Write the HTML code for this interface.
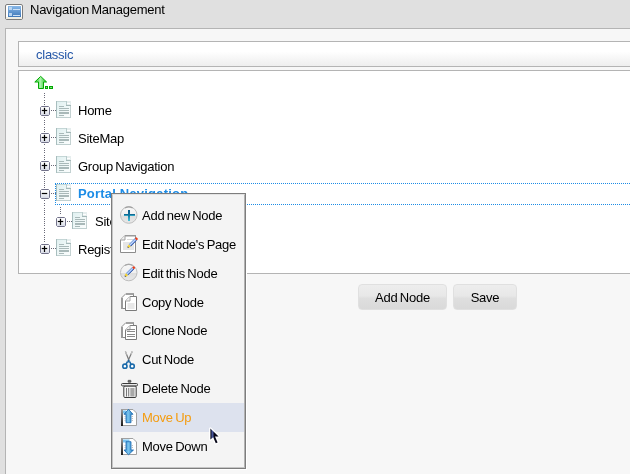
<!DOCTYPE html>
<html><head><meta charset="utf-8">
<style>
*{margin:0;padding:0;box-sizing:border-box}
html,body{width:630px;height:474px;overflow:hidden;background:#e0e0e0;font-family:"Liberation Sans",sans-serif;color:#000;letter-spacing:-0.25px;word-spacing:-1px}
.abs{position:absolute}
.t,.mi,#title,#tabtxt,.btn{will-change:transform}
#title{left:30px;top:2px;font-size:13px;line-height:16px;color:#000}
#panel{left:5px;top:28px;width:640px;height:460px;background:#f7f7f7;border:1px solid #b4b4b4}
#tab{left:18px;top:41px;width:630px;height:26px;border:1px solid #b4b4b4;background:linear-gradient(#fff 0,#fff 40%,#f6f6f6 70%,#eeeeee 100%)}
#tabtxt{left:36px;top:47px;font-size:13px;line-height:16px;color:#2457a8}
#tree{left:18px;top:70px;width:630px;height:204px;border:1px solid #b4b4b4;background:#fff}
.t{font-size:13px;line-height:16px;color:#000;white-space:nowrap}
.btn{height:26px;border-radius:4px;background:linear-gradient(#ededed 0,#e8e8e8 45%,#dfdfdf 55%,#d9d9d9 100%);font-size:13px;line-height:25px;text-align:center;color:#000;border:1px solid #e0e0e0}
#menu{left:111px;top:193px;width:135px;height:276px;background:#f4f4f4;border:1px solid #7d7d7d;box-shadow:1px 1px 0 #fff}
#menuin{left:112px;top:194px;width:133px;height:274px;border:1px solid #c6c6c6;border-top-color:#e4e4e4;border-right-color:#b2b2b2}
.mi{font-size:13px;line-height:16px;color:#000;white-space:nowrap}
</style></head><body>
<div class="abs" id="panel"></div>
<div class="abs" id="title">Navigation Management</div>
<div class="abs" id="tab"></div>
<div class="abs" id="tabtxt">classic</div>
<div class="abs" id="tree"></div>
<svg class="abs" style="left:0;top:0" width="630" height="474" viewBox="0 0 630 474">
<defs>
<linearGradient id="gbox" x1="0" y1="0" x2="0" y2="1"><stop offset="0" stop-color="#fff"/><stop offset="0.45" stop-color="#f4f5f8"/><stop offset="1" stop-color="#d4d8e4"/></linearGradient>
<linearGradient id="garr" x1="0" y1="0" x2="1" y2="0"><stop offset="0.3" stop-color="#6ee46e"/><stop offset="0.45" stop-color="#b0f6b0"/><stop offset="0.75" stop-color="#5ad85a"/></linearGradient>
<linearGradient id="gicon" x1="0" y1="0" x2="0" y2="1"><stop offset="0" stop-color="#88b8e8"/><stop offset="1" stop-color="#3f78b8"/></linearGradient>
<linearGradient id="gpg" x1="0" y1="0" x2="1" y2="1"><stop offset="0" stop-color="#dff0f0"/><stop offset="1" stop-color="#fdfefe"/></linearGradient>

</defs>
<!-- header icon -->
<rect x="5.5" y="4.5" width="17" height="15" rx="1.5" fill="#fff" stroke="#7c7c7c"/>
<rect x="6" y="17" width="16" height="2" fill="#f0eee4"/>
<rect x="8" y="6" width="13" height="11" fill="url(#gicon)"/>
<rect x="9" y="7" width="3" height="3" fill="#b8d4f0"/>
<rect x="9" y="13" width="3" height="3" fill="#b8d4f0"/>
<rect x="13" y="9" width="7" height="1" fill="#cfe2f6"/>
<rect x="13" y="15" width="7" height="1" fill="#cfe2f6"/>
<!-- green arrow -->
<path d="M40.7 76.4L46.6 82H43.5V88.5H38.5V82H34.8Z" fill="url(#garr)" stroke="#00a800" stroke-width="1" stroke-linejoin="miter"/>
<rect x="45" y="86" width="3" height="3" fill="#00a800"/><rect x="46" y="87" width="1" height="1" fill="#80e080"/>
<rect x="49" y="86" width="4" height="3" fill="#00a800"/><rect x="50" y="87" width="2" height="1" fill="#80e080"/>
<g fill="#6a6a78"><rect x="44" y="93" width="1" height="1"/><rect x="44" y="95" width="1" height="1"/><rect x="44" y="97" width="1" height="1"/><rect x="44" y="100" width="1" height="1"/><rect x="44" y="102" width="1" height="1"/><rect x="44" y="104" width="1" height="1"/><rect x="44" y="117" width="1" height="1"/><rect x="44" y="120" width="1" height="1"/><rect x="44" y="122" width="1" height="1"/><rect x="44" y="124" width="1" height="1"/><rect x="44" y="127" width="1" height="1"/><rect x="44" y="129" width="1" height="1"/><rect x="44" y="131" width="1" height="1"/><rect x="44" y="144" width="1" height="1"/><rect x="44" y="148" width="1" height="1"/><rect x="44" y="150" width="1" height="1"/><rect x="44" y="152" width="1" height="1"/><rect x="44" y="155" width="1" height="1"/><rect x="44" y="157" width="1" height="1"/><rect x="44" y="159" width="1" height="1"/><rect x="44" y="172" width="1" height="1"/><rect x="44" y="175" width="1" height="1"/><rect x="44" y="177" width="1" height="1"/><rect x="44" y="179" width="1" height="1"/><rect x="44" y="181" width="1" height="1"/><rect x="44" y="183" width="1" height="1"/><rect x="44" y="185" width="1" height="1"/><rect x="44" y="187" width="1" height="1"/><rect x="44" y="200" width="1" height="1"/><rect x="44" y="203" width="1" height="1"/><rect x="44" y="205" width="1" height="1"/><rect x="44" y="208" width="1" height="1"/><rect x="44" y="210" width="1" height="1"/><rect x="44" y="212" width="1" height="1"/><rect x="44" y="214" width="1" height="1"/><rect x="44" y="217" width="1" height="1"/><rect x="44" y="219" width="1" height="1"/><rect x="44" y="221" width="1" height="1"/><rect x="44" y="223" width="1" height="1"/><rect x="44" y="225" width="1" height="1"/><rect x="44" y="228" width="1" height="1"/><rect x="44" y="230" width="1" height="1"/><rect x="44" y="232" width="1" height="1"/><rect x="44" y="235" width="1" height="1"/><rect x="44" y="237" width="1" height="1"/><rect x="44" y="239" width="1" height="1"/><rect x="44" y="241" width="1" height="1"/><rect x="51" y="110" width="1" height="1"/><rect x="53" y="110" width="1" height="1"/><rect x="55" y="110" width="1" height="1"/><rect x="51" y="137" width="1" height="1"/><rect x="53" y="137" width="1" height="1"/><rect x="55" y="137" width="1" height="1"/><rect x="51" y="165" width="1" height="1"/><rect x="53" y="165" width="1" height="1"/><rect x="55" y="165" width="1" height="1"/><rect x="51" y="193" width="1" height="1"/><rect x="53" y="193" width="1" height="1"/><rect x="55" y="193" width="1" height="1"/><rect x="51" y="248" width="1" height="1"/><rect x="53" y="248" width="1" height="1"/><rect x="55" y="248" width="1" height="1"/><rect x="60" y="207" width="1" height="1"/><rect x="60" y="209" width="1" height="1"/><rect x="60" y="211" width="1" height="1"/><rect x="60" y="213" width="1" height="1"/><rect x="67" y="221" width="1" height="1"/><rect x="69" y="221" width="1" height="1"/><rect x="71" y="221" width="1" height="1"/></g>
<!-- selection outline -->
<g fill="#1c8ce6"><rect x="55" y="183" width="1" height="1"/><rect x="57" y="183" width="1" height="1"/><rect x="59" y="183" width="1" height="1"/><rect x="61" y="183" width="1" height="1"/><rect x="63" y="183" width="1" height="1"/><rect x="65" y="183" width="1" height="1"/><rect x="67" y="183" width="1" height="1"/><rect x="69" y="183" width="1" height="1"/><rect x="71" y="183" width="1" height="1"/><rect x="73" y="183" width="1" height="1"/><rect x="75" y="183" width="1" height="1"/><rect x="77" y="183" width="1" height="1"/><rect x="79" y="183" width="1" height="1"/><rect x="81" y="183" width="1" height="1"/><rect x="83" y="183" width="1" height="1"/><rect x="85" y="183" width="1" height="1"/><rect x="87" y="183" width="1" height="1"/><rect x="89" y="183" width="1" height="1"/><rect x="91" y="183" width="1" height="1"/><rect x="93" y="183" width="1" height="1"/><rect x="95" y="183" width="1" height="1"/><rect x="97" y="183" width="1" height="1"/><rect x="99" y="183" width="1" height="1"/><rect x="101" y="183" width="1" height="1"/><rect x="103" y="183" width="1" height="1"/><rect x="105" y="183" width="1" height="1"/><rect x="107" y="183" width="1" height="1"/><rect x="109" y="183" width="1" height="1"/><rect x="111" y="183" width="1" height="1"/><rect x="113" y="183" width="1" height="1"/><rect x="115" y="183" width="1" height="1"/><rect x="117" y="183" width="1" height="1"/><rect x="119" y="183" width="1" height="1"/><rect x="121" y="183" width="1" height="1"/><rect x="123" y="183" width="1" height="1"/><rect x="125" y="183" width="1" height="1"/><rect x="127" y="183" width="1" height="1"/><rect x="129" y="183" width="1" height="1"/><rect x="131" y="183" width="1" height="1"/><rect x="133" y="183" width="1" height="1"/><rect x="135" y="183" width="1" height="1"/><rect x="137" y="183" width="1" height="1"/><rect x="139" y="183" width="1" height="1"/><rect x="141" y="183" width="1" height="1"/><rect x="143" y="183" width="1" height="1"/><rect x="145" y="183" width="1" height="1"/><rect x="147" y="183" width="1" height="1"/><rect x="149" y="183" width="1" height="1"/><rect x="151" y="183" width="1" height="1"/><rect x="153" y="183" width="1" height="1"/><rect x="155" y="183" width="1" height="1"/><rect x="157" y="183" width="1" height="1"/><rect x="159" y="183" width="1" height="1"/><rect x="161" y="183" width="1" height="1"/><rect x="163" y="183" width="1" height="1"/><rect x="165" y="183" width="1" height="1"/><rect x="167" y="183" width="1" height="1"/><rect x="169" y="183" width="1" height="1"/><rect x="171" y="183" width="1" height="1"/><rect x="173" y="183" width="1" height="1"/><rect x="175" y="183" width="1" height="1"/><rect x="177" y="183" width="1" height="1"/><rect x="179" y="183" width="1" height="1"/><rect x="181" y="183" width="1" height="1"/><rect x="183" y="183" width="1" height="1"/><rect x="185" y="183" width="1" height="1"/><rect x="187" y="183" width="1" height="1"/><rect x="189" y="183" width="1" height="1"/><rect x="191" y="183" width="1" height="1"/><rect x="193" y="183" width="1" height="1"/><rect x="195" y="183" width="1" height="1"/><rect x="197" y="183" width="1" height="1"/><rect x="199" y="183" width="1" height="1"/><rect x="201" y="183" width="1" height="1"/><rect x="203" y="183" width="1" height="1"/><rect x="205" y="183" width="1" height="1"/><rect x="207" y="183" width="1" height="1"/><rect x="209" y="183" width="1" height="1"/><rect x="211" y="183" width="1" height="1"/><rect x="213" y="183" width="1" height="1"/><rect x="215" y="183" width="1" height="1"/><rect x="217" y="183" width="1" height="1"/><rect x="219" y="183" width="1" height="1"/><rect x="221" y="183" width="1" height="1"/><rect x="223" y="183" width="1" height="1"/><rect x="225" y="183" width="1" height="1"/><rect x="227" y="183" width="1" height="1"/><rect x="229" y="183" width="1" height="1"/><rect x="231" y="183" width="1" height="1"/><rect x="233" y="183" width="1" height="1"/><rect x="235" y="183" width="1" height="1"/><rect x="237" y="183" width="1" height="1"/><rect x="239" y="183" width="1" height="1"/><rect x="241" y="183" width="1" height="1"/><rect x="243" y="183" width="1" height="1"/><rect x="245" y="183" width="1" height="1"/><rect x="247" y="183" width="1" height="1"/><rect x="249" y="183" width="1" height="1"/><rect x="251" y="183" width="1" height="1"/><rect x="253" y="183" width="1" height="1"/><rect x="255" y="183" width="1" height="1"/><rect x="257" y="183" width="1" height="1"/><rect x="259" y="183" width="1" height="1"/><rect x="261" y="183" width="1" height="1"/><rect x="263" y="183" width="1" height="1"/><rect x="265" y="183" width="1" height="1"/><rect x="267" y="183" width="1" height="1"/><rect x="269" y="183" width="1" height="1"/><rect x="271" y="183" width="1" height="1"/><rect x="273" y="183" width="1" height="1"/><rect x="275" y="183" width="1" height="1"/><rect x="277" y="183" width="1" height="1"/><rect x="279" y="183" width="1" height="1"/><rect x="281" y="183" width="1" height="1"/><rect x="283" y="183" width="1" height="1"/><rect x="285" y="183" width="1" height="1"/><rect x="287" y="183" width="1" height="1"/><rect x="289" y="183" width="1" height="1"/><rect x="291" y="183" width="1" height="1"/><rect x="293" y="183" width="1" height="1"/><rect x="295" y="183" width="1" height="1"/><rect x="297" y="183" width="1" height="1"/><rect x="299" y="183" width="1" height="1"/><rect x="301" y="183" width="1" height="1"/><rect x="303" y="183" width="1" height="1"/><rect x="305" y="183" width="1" height="1"/><rect x="307" y="183" width="1" height="1"/><rect x="309" y="183" width="1" height="1"/><rect x="311" y="183" width="1" height="1"/><rect x="313" y="183" width="1" height="1"/><rect x="315" y="183" width="1" height="1"/><rect x="317" y="183" width="1" height="1"/><rect x="319" y="183" width="1" height="1"/><rect x="321" y="183" width="1" height="1"/><rect x="323" y="183" width="1" height="1"/><rect x="325" y="183" width="1" height="1"/><rect x="327" y="183" width="1" height="1"/><rect x="329" y="183" width="1" height="1"/><rect x="331" y="183" width="1" height="1"/><rect x="333" y="183" width="1" height="1"/><rect x="335" y="183" width="1" height="1"/><rect x="337" y="183" width="1" height="1"/><rect x="339" y="183" width="1" height="1"/><rect x="341" y="183" width="1" height="1"/><rect x="343" y="183" width="1" height="1"/><rect x="345" y="183" width="1" height="1"/><rect x="347" y="183" width="1" height="1"/><rect x="349" y="183" width="1" height="1"/><rect x="351" y="183" width="1" height="1"/><rect x="353" y="183" width="1" height="1"/><rect x="355" y="183" width="1" height="1"/><rect x="357" y="183" width="1" height="1"/><rect x="359" y="183" width="1" height="1"/><rect x="361" y="183" width="1" height="1"/><rect x="363" y="183" width="1" height="1"/><rect x="365" y="183" width="1" height="1"/><rect x="367" y="183" width="1" height="1"/><rect x="369" y="183" width="1" height="1"/><rect x="371" y="183" width="1" height="1"/><rect x="373" y="183" width="1" height="1"/><rect x="375" y="183" width="1" height="1"/><rect x="377" y="183" width="1" height="1"/><rect x="379" y="183" width="1" height="1"/><rect x="381" y="183" width="1" height="1"/><rect x="383" y="183" width="1" height="1"/><rect x="385" y="183" width="1" height="1"/><rect x="387" y="183" width="1" height="1"/><rect x="389" y="183" width="1" height="1"/><rect x="391" y="183" width="1" height="1"/><rect x="393" y="183" width="1" height="1"/><rect x="395" y="183" width="1" height="1"/><rect x="397" y="183" width="1" height="1"/><rect x="399" y="183" width="1" height="1"/><rect x="401" y="183" width="1" height="1"/><rect x="403" y="183" width="1" height="1"/><rect x="405" y="183" width="1" height="1"/><rect x="407" y="183" width="1" height="1"/><rect x="409" y="183" width="1" height="1"/><rect x="411" y="183" width="1" height="1"/><rect x="413" y="183" width="1" height="1"/><rect x="415" y="183" width="1" height="1"/><rect x="417" y="183" width="1" height="1"/><rect x="419" y="183" width="1" height="1"/><rect x="421" y="183" width="1" height="1"/><rect x="423" y="183" width="1" height="1"/><rect x="425" y="183" width="1" height="1"/><rect x="427" y="183" width="1" height="1"/><rect x="429" y="183" width="1" height="1"/><rect x="431" y="183" width="1" height="1"/><rect x="433" y="183" width="1" height="1"/><rect x="435" y="183" width="1" height="1"/><rect x="437" y="183" width="1" height="1"/><rect x="439" y="183" width="1" height="1"/><rect x="441" y="183" width="1" height="1"/><rect x="443" y="183" width="1" height="1"/><rect x="445" y="183" width="1" height="1"/><rect x="447" y="183" width="1" height="1"/><rect x="449" y="183" width="1" height="1"/><rect x="451" y="183" width="1" height="1"/><rect x="453" y="183" width="1" height="1"/><rect x="455" y="183" width="1" height="1"/><rect x="457" y="183" width="1" height="1"/><rect x="459" y="183" width="1" height="1"/><rect x="461" y="183" width="1" height="1"/><rect x="463" y="183" width="1" height="1"/><rect x="465" y="183" width="1" height="1"/><rect x="467" y="183" width="1" height="1"/><rect x="469" y="183" width="1" height="1"/><rect x="471" y="183" width="1" height="1"/><rect x="473" y="183" width="1" height="1"/><rect x="475" y="183" width="1" height="1"/><rect x="477" y="183" width="1" height="1"/><rect x="479" y="183" width="1" height="1"/><rect x="481" y="183" width="1" height="1"/><rect x="483" y="183" width="1" height="1"/><rect x="485" y="183" width="1" height="1"/><rect x="487" y="183" width="1" height="1"/><rect x="489" y="183" width="1" height="1"/><rect x="491" y="183" width="1" height="1"/><rect x="493" y="183" width="1" height="1"/><rect x="495" y="183" width="1" height="1"/><rect x="497" y="183" width="1" height="1"/><rect x="499" y="183" width="1" height="1"/><rect x="501" y="183" width="1" height="1"/><rect x="503" y="183" width="1" height="1"/><rect x="505" y="183" width="1" height="1"/><rect x="507" y="183" width="1" height="1"/><rect x="509" y="183" width="1" height="1"/><rect x="511" y="183" width="1" height="1"/><rect x="513" y="183" width="1" height="1"/><rect x="515" y="183" width="1" height="1"/><rect x="517" y="183" width="1" height="1"/><rect x="519" y="183" width="1" height="1"/><rect x="521" y="183" width="1" height="1"/><rect x="523" y="183" width="1" height="1"/><rect x="525" y="183" width="1" height="1"/><rect x="527" y="183" width="1" height="1"/><rect x="529" y="183" width="1" height="1"/><rect x="531" y="183" width="1" height="1"/><rect x="533" y="183" width="1" height="1"/><rect x="535" y="183" width="1" height="1"/><rect x="537" y="183" width="1" height="1"/><rect x="539" y="183" width="1" height="1"/><rect x="541" y="183" width="1" height="1"/><rect x="543" y="183" width="1" height="1"/><rect x="545" y="183" width="1" height="1"/><rect x="547" y="183" width="1" height="1"/><rect x="549" y="183" width="1" height="1"/><rect x="551" y="183" width="1" height="1"/><rect x="553" y="183" width="1" height="1"/><rect x="555" y="183" width="1" height="1"/><rect x="557" y="183" width="1" height="1"/><rect x="559" y="183" width="1" height="1"/><rect x="561" y="183" width="1" height="1"/><rect x="563" y="183" width="1" height="1"/><rect x="565" y="183" width="1" height="1"/><rect x="567" y="183" width="1" height="1"/><rect x="569" y="183" width="1" height="1"/><rect x="571" y="183" width="1" height="1"/><rect x="573" y="183" width="1" height="1"/><rect x="575" y="183" width="1" height="1"/><rect x="577" y="183" width="1" height="1"/><rect x="579" y="183" width="1" height="1"/><rect x="581" y="183" width="1" height="1"/><rect x="583" y="183" width="1" height="1"/><rect x="585" y="183" width="1" height="1"/><rect x="587" y="183" width="1" height="1"/><rect x="589" y="183" width="1" height="1"/><rect x="591" y="183" width="1" height="1"/><rect x="593" y="183" width="1" height="1"/><rect x="595" y="183" width="1" height="1"/><rect x="597" y="183" width="1" height="1"/><rect x="599" y="183" width="1" height="1"/><rect x="601" y="183" width="1" height="1"/><rect x="603" y="183" width="1" height="1"/><rect x="605" y="183" width="1" height="1"/><rect x="607" y="183" width="1" height="1"/><rect x="609" y="183" width="1" height="1"/><rect x="611" y="183" width="1" height="1"/><rect x="613" y="183" width="1" height="1"/><rect x="615" y="183" width="1" height="1"/><rect x="617" y="183" width="1" height="1"/><rect x="619" y="183" width="1" height="1"/><rect x="621" y="183" width="1" height="1"/><rect x="623" y="183" width="1" height="1"/><rect x="625" y="183" width="1" height="1"/><rect x="627" y="183" width="1" height="1"/><rect x="629" y="183" width="1" height="1"/><rect x="55" y="204" width="1" height="1"/><rect x="57" y="204" width="1" height="1"/><rect x="59" y="204" width="1" height="1"/><rect x="61" y="204" width="1" height="1"/><rect x="63" y="204" width="1" height="1"/><rect x="65" y="204" width="1" height="1"/><rect x="67" y="204" width="1" height="1"/><rect x="69" y="204" width="1" height="1"/><rect x="71" y="204" width="1" height="1"/><rect x="73" y="204" width="1" height="1"/><rect x="75" y="204" width="1" height="1"/><rect x="77" y="204" width="1" height="1"/><rect x="79" y="204" width="1" height="1"/><rect x="81" y="204" width="1" height="1"/><rect x="83" y="204" width="1" height="1"/><rect x="85" y="204" width="1" height="1"/><rect x="87" y="204" width="1" height="1"/><rect x="89" y="204" width="1" height="1"/><rect x="91" y="204" width="1" height="1"/><rect x="93" y="204" width="1" height="1"/><rect x="95" y="204" width="1" height="1"/><rect x="97" y="204" width="1" height="1"/><rect x="99" y="204" width="1" height="1"/><rect x="101" y="204" width="1" height="1"/><rect x="103" y="204" width="1" height="1"/><rect x="105" y="204" width="1" height="1"/><rect x="107" y="204" width="1" height="1"/><rect x="109" y="204" width="1" height="1"/><rect x="111" y="204" width="1" height="1"/><rect x="113" y="204" width="1" height="1"/><rect x="115" y="204" width="1" height="1"/><rect x="117" y="204" width="1" height="1"/><rect x="119" y="204" width="1" height="1"/><rect x="121" y="204" width="1" height="1"/><rect x="123" y="204" width="1" height="1"/><rect x="125" y="204" width="1" height="1"/><rect x="127" y="204" width="1" height="1"/><rect x="129" y="204" width="1" height="1"/><rect x="131" y="204" width="1" height="1"/><rect x="133" y="204" width="1" height="1"/><rect x="135" y="204" width="1" height="1"/><rect x="137" y="204" width="1" height="1"/><rect x="139" y="204" width="1" height="1"/><rect x="141" y="204" width="1" height="1"/><rect x="143" y="204" width="1" height="1"/><rect x="145" y="204" width="1" height="1"/><rect x="147" y="204" width="1" height="1"/><rect x="149" y="204" width="1" height="1"/><rect x="151" y="204" width="1" height="1"/><rect x="153" y="204" width="1" height="1"/><rect x="155" y="204" width="1" height="1"/><rect x="157" y="204" width="1" height="1"/><rect x="159" y="204" width="1" height="1"/><rect x="161" y="204" width="1" height="1"/><rect x="163" y="204" width="1" height="1"/><rect x="165" y="204" width="1" height="1"/><rect x="167" y="204" width="1" height="1"/><rect x="169" y="204" width="1" height="1"/><rect x="171" y="204" width="1" height="1"/><rect x="173" y="204" width="1" height="1"/><rect x="175" y="204" width="1" height="1"/><rect x="177" y="204" width="1" height="1"/><rect x="179" y="204" width="1" height="1"/><rect x="181" y="204" width="1" height="1"/><rect x="183" y="204" width="1" height="1"/><rect x="185" y="204" width="1" height="1"/><rect x="187" y="204" width="1" height="1"/><rect x="189" y="204" width="1" height="1"/><rect x="191" y="204" width="1" height="1"/><rect x="193" y="204" width="1" height="1"/><rect x="195" y="204" width="1" height="1"/><rect x="197" y="204" width="1" height="1"/><rect x="199" y="204" width="1" height="1"/><rect x="201" y="204" width="1" height="1"/><rect x="203" y="204" width="1" height="1"/><rect x="205" y="204" width="1" height="1"/><rect x="207" y="204" width="1" height="1"/><rect x="209" y="204" width="1" height="1"/><rect x="211" y="204" width="1" height="1"/><rect x="213" y="204" width="1" height="1"/><rect x="215" y="204" width="1" height="1"/><rect x="217" y="204" width="1" height="1"/><rect x="219" y="204" width="1" height="1"/><rect x="221" y="204" width="1" height="1"/><rect x="223" y="204" width="1" height="1"/><rect x="225" y="204" width="1" height="1"/><rect x="227" y="204" width="1" height="1"/><rect x="229" y="204" width="1" height="1"/><rect x="231" y="204" width="1" height="1"/><rect x="233" y="204" width="1" height="1"/><rect x="235" y="204" width="1" height="1"/><rect x="237" y="204" width="1" height="1"/><rect x="239" y="204" width="1" height="1"/><rect x="241" y="204" width="1" height="1"/><rect x="243" y="204" width="1" height="1"/><rect x="245" y="204" width="1" height="1"/><rect x="247" y="204" width="1" height="1"/><rect x="249" y="204" width="1" height="1"/><rect x="251" y="204" width="1" height="1"/><rect x="253" y="204" width="1" height="1"/><rect x="255" y="204" width="1" height="1"/><rect x="257" y="204" width="1" height="1"/><rect x="259" y="204" width="1" height="1"/><rect x="261" y="204" width="1" height="1"/><rect x="263" y="204" width="1" height="1"/><rect x="265" y="204" width="1" height="1"/><rect x="267" y="204" width="1" height="1"/><rect x="269" y="204" width="1" height="1"/><rect x="271" y="204" width="1" height="1"/><rect x="273" y="204" width="1" height="1"/><rect x="275" y="204" width="1" height="1"/><rect x="277" y="204" width="1" height="1"/><rect x="279" y="204" width="1" height="1"/><rect x="281" y="204" width="1" height="1"/><rect x="283" y="204" width="1" height="1"/><rect x="285" y="204" width="1" height="1"/><rect x="287" y="204" width="1" height="1"/><rect x="289" y="204" width="1" height="1"/><rect x="291" y="204" width="1" height="1"/><rect x="293" y="204" width="1" height="1"/><rect x="295" y="204" width="1" height="1"/><rect x="297" y="204" width="1" height="1"/><rect x="299" y="204" width="1" height="1"/><rect x="301" y="204" width="1" height="1"/><rect x="303" y="204" width="1" height="1"/><rect x="305" y="204" width="1" height="1"/><rect x="307" y="204" width="1" height="1"/><rect x="309" y="204" width="1" height="1"/><rect x="311" y="204" width="1" height="1"/><rect x="313" y="204" width="1" height="1"/><rect x="315" y="204" width="1" height="1"/><rect x="317" y="204" width="1" height="1"/><rect x="319" y="204" width="1" height="1"/><rect x="321" y="204" width="1" height="1"/><rect x="323" y="204" width="1" height="1"/><rect x="325" y="204" width="1" height="1"/><rect x="327" y="204" width="1" height="1"/><rect x="329" y="204" width="1" height="1"/><rect x="331" y="204" width="1" height="1"/><rect x="333" y="204" width="1" height="1"/><rect x="335" y="204" width="1" height="1"/><rect x="337" y="204" width="1" height="1"/><rect x="339" y="204" width="1" height="1"/><rect x="341" y="204" width="1" height="1"/><rect x="343" y="204" width="1" height="1"/><rect x="345" y="204" width="1" height="1"/><rect x="347" y="204" width="1" height="1"/><rect x="349" y="204" width="1" height="1"/><rect x="351" y="204" width="1" height="1"/><rect x="353" y="204" width="1" height="1"/><rect x="355" y="204" width="1" height="1"/><rect x="357" y="204" width="1" height="1"/><rect x="359" y="204" width="1" height="1"/><rect x="361" y="204" width="1" height="1"/><rect x="363" y="204" width="1" height="1"/><rect x="365" y="204" width="1" height="1"/><rect x="367" y="204" width="1" height="1"/><rect x="369" y="204" width="1" height="1"/><rect x="371" y="204" width="1" height="1"/><rect x="373" y="204" width="1" height="1"/><rect x="375" y="204" width="1" height="1"/><rect x="377" y="204" width="1" height="1"/><rect x="379" y="204" width="1" height="1"/><rect x="381" y="204" width="1" height="1"/><rect x="383" y="204" width="1" height="1"/><rect x="385" y="204" width="1" height="1"/><rect x="387" y="204" width="1" height="1"/><rect x="389" y="204" width="1" height="1"/><rect x="391" y="204" width="1" height="1"/><rect x="393" y="204" width="1" height="1"/><rect x="395" y="204" width="1" height="1"/><rect x="397" y="204" width="1" height="1"/><rect x="399" y="204" width="1" height="1"/><rect x="401" y="204" width="1" height="1"/><rect x="403" y="204" width="1" height="1"/><rect x="405" y="204" width="1" height="1"/><rect x="407" y="204" width="1" height="1"/><rect x="409" y="204" width="1" height="1"/><rect x="411" y="204" width="1" height="1"/><rect x="413" y="204" width="1" height="1"/><rect x="415" y="204" width="1" height="1"/><rect x="417" y="204" width="1" height="1"/><rect x="419" y="204" width="1" height="1"/><rect x="421" y="204" width="1" height="1"/><rect x="423" y="204" width="1" height="1"/><rect x="425" y="204" width="1" height="1"/><rect x="427" y="204" width="1" height="1"/><rect x="429" y="204" width="1" height="1"/><rect x="431" y="204" width="1" height="1"/><rect x="433" y="204" width="1" height="1"/><rect x="435" y="204" width="1" height="1"/><rect x="437" y="204" width="1" height="1"/><rect x="439" y="204" width="1" height="1"/><rect x="441" y="204" width="1" height="1"/><rect x="443" y="204" width="1" height="1"/><rect x="445" y="204" width="1" height="1"/><rect x="447" y="204" width="1" height="1"/><rect x="449" y="204" width="1" height="1"/><rect x="451" y="204" width="1" height="1"/><rect x="453" y="204" width="1" height="1"/><rect x="455" y="204" width="1" height="1"/><rect x="457" y="204" width="1" height="1"/><rect x="459" y="204" width="1" height="1"/><rect x="461" y="204" width="1" height="1"/><rect x="463" y="204" width="1" height="1"/><rect x="465" y="204" width="1" height="1"/><rect x="467" y="204" width="1" height="1"/><rect x="469" y="204" width="1" height="1"/><rect x="471" y="204" width="1" height="1"/><rect x="473" y="204" width="1" height="1"/><rect x="475" y="204" width="1" height="1"/><rect x="477" y="204" width="1" height="1"/><rect x="479" y="204" width="1" height="1"/><rect x="481" y="204" width="1" height="1"/><rect x="483" y="204" width="1" height="1"/><rect x="485" y="204" width="1" height="1"/><rect x="487" y="204" width="1" height="1"/><rect x="489" y="204" width="1" height="1"/><rect x="491" y="204" width="1" height="1"/><rect x="493" y="204" width="1" height="1"/><rect x="495" y="204" width="1" height="1"/><rect x="497" y="204" width="1" height="1"/><rect x="499" y="204" width="1" height="1"/><rect x="501" y="204" width="1" height="1"/><rect x="503" y="204" width="1" height="1"/><rect x="505" y="204" width="1" height="1"/><rect x="507" y="204" width="1" height="1"/><rect x="509" y="204" width="1" height="1"/><rect x="511" y="204" width="1" height="1"/><rect x="513" y="204" width="1" height="1"/><rect x="515" y="204" width="1" height="1"/><rect x="517" y="204" width="1" height="1"/><rect x="519" y="204" width="1" height="1"/><rect x="521" y="204" width="1" height="1"/><rect x="523" y="204" width="1" height="1"/><rect x="525" y="204" width="1" height="1"/><rect x="527" y="204" width="1" height="1"/><rect x="529" y="204" width="1" height="1"/><rect x="531" y="204" width="1" height="1"/><rect x="533" y="204" width="1" height="1"/><rect x="535" y="204" width="1" height="1"/><rect x="537" y="204" width="1" height="1"/><rect x="539" y="204" width="1" height="1"/><rect x="541" y="204" width="1" height="1"/><rect x="543" y="204" width="1" height="1"/><rect x="545" y="204" width="1" height="1"/><rect x="547" y="204" width="1" height="1"/><rect x="549" y="204" width="1" height="1"/><rect x="551" y="204" width="1" height="1"/><rect x="553" y="204" width="1" height="1"/><rect x="555" y="204" width="1" height="1"/><rect x="557" y="204" width="1" height="1"/><rect x="559" y="204" width="1" height="1"/><rect x="561" y="204" width="1" height="1"/><rect x="563" y="204" width="1" height="1"/><rect x="565" y="204" width="1" height="1"/><rect x="567" y="204" width="1" height="1"/><rect x="569" y="204" width="1" height="1"/><rect x="571" y="204" width="1" height="1"/><rect x="573" y="204" width="1" height="1"/><rect x="575" y="204" width="1" height="1"/><rect x="577" y="204" width="1" height="1"/><rect x="579" y="204" width="1" height="1"/><rect x="581" y="204" width="1" height="1"/><rect x="583" y="204" width="1" height="1"/><rect x="585" y="204" width="1" height="1"/><rect x="587" y="204" width="1" height="1"/><rect x="589" y="204" width="1" height="1"/><rect x="591" y="204" width="1" height="1"/><rect x="593" y="204" width="1" height="1"/><rect x="595" y="204" width="1" height="1"/><rect x="597" y="204" width="1" height="1"/><rect x="599" y="204" width="1" height="1"/><rect x="601" y="204" width="1" height="1"/><rect x="603" y="204" width="1" height="1"/><rect x="605" y="204" width="1" height="1"/><rect x="607" y="204" width="1" height="1"/><rect x="609" y="204" width="1" height="1"/><rect x="611" y="204" width="1" height="1"/><rect x="613" y="204" width="1" height="1"/><rect x="615" y="204" width="1" height="1"/><rect x="617" y="204" width="1" height="1"/><rect x="619" y="204" width="1" height="1"/><rect x="621" y="204" width="1" height="1"/><rect x="623" y="204" width="1" height="1"/><rect x="625" y="204" width="1" height="1"/><rect x="627" y="204" width="1" height="1"/><rect x="629" y="204" width="1" height="1"/><rect x="55" y="184" width="1" height="1"/><rect x="55" y="186" width="1" height="1"/><rect x="55" y="188" width="1" height="1"/><rect x="55" y="190" width="1" height="1"/><rect x="55" y="192" width="1" height="1"/><rect x="55" y="194" width="1" height="1"/><rect x="55" y="196" width="1" height="1"/><rect x="55" y="198" width="1" height="1"/><rect x="55" y="200" width="1" height="1"/><rect x="55" y="202" width="1" height="1"/><rect x="55" y="204" width="1" height="1"/></g>
<g transform="translate(40,106)"><path d="M1.5 0.5H8.5L9.5 1.5V8.5L8.5 9.5H1.5L0.5 8.5V1.5Z" fill="url(#gbox)" stroke="#72728a" stroke-width="1"/><rect x="1.8" y="3.9" width="5.4" height="1.2" fill="#000"/><rect x="3.9" y="1.8" width="1.2" height="6.2" fill="#000"/></g><g transform="translate(40,133)"><path d="M1.5 0.5H8.5L9.5 1.5V8.5L8.5 9.5H1.5L0.5 8.5V1.5Z" fill="url(#gbox)" stroke="#72728a" stroke-width="1"/><rect x="1.8" y="3.9" width="5.4" height="1.2" fill="#000"/><rect x="3.9" y="1.8" width="1.2" height="6.2" fill="#000"/></g><g transform="translate(40,161)"><path d="M1.5 0.5H8.5L9.5 1.5V8.5L8.5 9.5H1.5L0.5 8.5V1.5Z" fill="url(#gbox)" stroke="#72728a" stroke-width="1"/><rect x="1.8" y="3.9" width="5.4" height="1.2" fill="#000"/><rect x="3.9" y="1.8" width="1.2" height="6.2" fill="#000"/></g><g transform="translate(40,189)"><path d="M1.5 0.5H8.5L9.5 1.5V8.5L8.5 9.5H1.5L0.5 8.5V1.5Z" fill="url(#gbox)" stroke="#72728a" stroke-width="1"/><rect x="1.8" y="3.9" width="5.4" height="1.2" fill="#000"/></g><g transform="translate(56,217)"><path d="M1.5 0.5H8.5L9.5 1.5V8.5L8.5 9.5H1.5L0.5 8.5V1.5Z" fill="url(#gbox)" stroke="#72728a" stroke-width="1"/><rect x="1.8" y="3.9" width="5.4" height="1.2" fill="#000"/><rect x="3.9" y="1.8" width="1.2" height="6.2" fill="#000"/></g><g transform="translate(40,244)"><path d="M1.5 0.5H8.5L9.5 1.5V8.5L8.5 9.5H1.5L0.5 8.5V1.5Z" fill="url(#gbox)" stroke="#72728a" stroke-width="1"/><rect x="1.8" y="3.9" width="5.4" height="1.2" fill="#000"/><rect x="3.9" y="1.8" width="1.2" height="6.2" fill="#000"/></g>
<g transform="translate(56,101)">
<rect x="0" y="0" width="15" height="17" fill="url(#gpg)"/>
<rect x="0" y="0" width="1" height="17" fill="#a8bebe"/>
<rect x="1" y="0" width="10" height="1" fill="#c4d6d6"/>
<rect x="14" y="5" width="1" height="12" fill="#c4d2d2"/>
<rect x="1" y="16" width="14" height="1" fill="#c0d0d0"/>
<rect x="10" y="0" width="5" height="5" fill="#e6eeee"/>
<rect x="10" y="0" width="1" height="5" fill="#b8cccc"/>
<rect x="10" y="4" width="5" height="1" fill="#a4b8b8"/>
<rect x="11" y="2" width="3" height="1" fill="#fff"/>
<rect x="3" y="5" width="5" height="1" fill="#a9b9b9"/>
<rect x="3" y="7" width="10" height="1" fill="#a9b9b9"/>
<rect x="3" y="9" width="10" height="1" fill="#a9b9b9"/>
<rect x="3" y="11" width="10" height="2" fill="#a9b9b9"/>
<rect x="3" y="14" width="5" height="1" fill="#a9b9b9"/>
</g><g transform="translate(56,128)">
<rect x="0" y="0" width="15" height="17" fill="url(#gpg)"/>
<rect x="0" y="0" width="1" height="17" fill="#a8bebe"/>
<rect x="1" y="0" width="10" height="1" fill="#c4d6d6"/>
<rect x="14" y="5" width="1" height="12" fill="#c4d2d2"/>
<rect x="1" y="16" width="14" height="1" fill="#c0d0d0"/>
<rect x="10" y="0" width="5" height="5" fill="#e6eeee"/>
<rect x="10" y="0" width="1" height="5" fill="#b8cccc"/>
<rect x="10" y="4" width="5" height="1" fill="#a4b8b8"/>
<rect x="11" y="2" width="3" height="1" fill="#fff"/>
<rect x="3" y="5" width="5" height="1" fill="#a9b9b9"/>
<rect x="3" y="7" width="10" height="1" fill="#a9b9b9"/>
<rect x="3" y="9" width="10" height="1" fill="#a9b9b9"/>
<rect x="3" y="11" width="10" height="2" fill="#a9b9b9"/>
<rect x="3" y="14" width="5" height="1" fill="#a9b9b9"/>
</g><g transform="translate(56,156)">
<rect x="0" y="0" width="15" height="17" fill="url(#gpg)"/>
<rect x="0" y="0" width="1" height="17" fill="#a8bebe"/>
<rect x="1" y="0" width="10" height="1" fill="#c4d6d6"/>
<rect x="14" y="5" width="1" height="12" fill="#c4d2d2"/>
<rect x="1" y="16" width="14" height="1" fill="#c0d0d0"/>
<rect x="10" y="0" width="5" height="5" fill="#e6eeee"/>
<rect x="10" y="0" width="1" height="5" fill="#b8cccc"/>
<rect x="10" y="4" width="5" height="1" fill="#a4b8b8"/>
<rect x="11" y="2" width="3" height="1" fill="#fff"/>
<rect x="3" y="5" width="5" height="1" fill="#a9b9b9"/>
<rect x="3" y="7" width="10" height="1" fill="#a9b9b9"/>
<rect x="3" y="9" width="10" height="1" fill="#a9b9b9"/>
<rect x="3" y="11" width="10" height="2" fill="#a9b9b9"/>
<rect x="3" y="14" width="5" height="1" fill="#a9b9b9"/>
</g><g transform="translate(56,184)">
<rect x="0" y="0" width="15" height="17" fill="url(#gpg)"/>
<rect x="0" y="0" width="1" height="17" fill="#a8bebe"/>
<rect x="1" y="0" width="10" height="1" fill="#c4d6d6"/>
<rect x="14" y="5" width="1" height="12" fill="#c4d2d2"/>
<rect x="1" y="16" width="14" height="1" fill="#c0d0d0"/>
<rect x="10" y="0" width="5" height="5" fill="#e6eeee"/>
<rect x="10" y="0" width="1" height="5" fill="#b8cccc"/>
<rect x="10" y="4" width="5" height="1" fill="#a4b8b8"/>
<rect x="11" y="2" width="3" height="1" fill="#fff"/>
<rect x="3" y="5" width="5" height="1" fill="#a9b9b9"/>
<rect x="3" y="7" width="10" height="1" fill="#a9b9b9"/>
<rect x="3" y="9" width="10" height="1" fill="#a9b9b9"/>
<rect x="3" y="11" width="10" height="2" fill="#a9b9b9"/>
<rect x="3" y="14" width="5" height="1" fill="#a9b9b9"/>
</g><g transform="translate(72,212)">
<rect x="0" y="0" width="15" height="17" fill="url(#gpg)"/>
<rect x="0" y="0" width="1" height="17" fill="#a8bebe"/>
<rect x="1" y="0" width="10" height="1" fill="#c4d6d6"/>
<rect x="14" y="5" width="1" height="12" fill="#c4d2d2"/>
<rect x="1" y="16" width="14" height="1" fill="#c0d0d0"/>
<rect x="10" y="0" width="5" height="5" fill="#e6eeee"/>
<rect x="10" y="0" width="1" height="5" fill="#b8cccc"/>
<rect x="10" y="4" width="5" height="1" fill="#a4b8b8"/>
<rect x="11" y="2" width="3" height="1" fill="#fff"/>
<rect x="3" y="5" width="5" height="1" fill="#a9b9b9"/>
<rect x="3" y="7" width="10" height="1" fill="#a9b9b9"/>
<rect x="3" y="9" width="10" height="1" fill="#a9b9b9"/>
<rect x="3" y="11" width="10" height="2" fill="#a9b9b9"/>
<rect x="3" y="14" width="5" height="1" fill="#a9b9b9"/>
</g><g transform="translate(56,239)">
<rect x="0" y="0" width="15" height="17" fill="url(#gpg)"/>
<rect x="0" y="0" width="1" height="17" fill="#a8bebe"/>
<rect x="1" y="0" width="10" height="1" fill="#c4d6d6"/>
<rect x="14" y="5" width="1" height="12" fill="#c4d2d2"/>
<rect x="1" y="16" width="14" height="1" fill="#c0d0d0"/>
<rect x="10" y="0" width="5" height="5" fill="#e6eeee"/>
<rect x="10" y="0" width="1" height="5" fill="#b8cccc"/>
<rect x="10" y="4" width="5" height="1" fill="#a4b8b8"/>
<rect x="11" y="2" width="3" height="1" fill="#fff"/>
<rect x="3" y="5" width="5" height="1" fill="#a9b9b9"/>
<rect x="3" y="7" width="10" height="1" fill="#a9b9b9"/>
<rect x="3" y="9" width="10" height="1" fill="#a9b9b9"/>
<rect x="3" y="11" width="10" height="2" fill="#a9b9b9"/>
<rect x="3" y="14" width="5" height="1" fill="#a9b9b9"/>
</g>
</svg>
<div class="abs t" style="left:78px;top:103px">Home</div>
<div class="abs t" style="left:78px;top:131px">SiteMap</div>
<div class="abs t" style="left:78px;top:159px">Group Navigation</div>
<div class="abs t" style="left:78px;top:186px;font-weight:bold;color:#1c8ce6;letter-spacing:0.2px;word-spacing:0">Portal Navigation</div>
<div class="abs t" style="left:95px;top:214px">SiteMap</div>
<div class="abs t" style="left:78px;top:242px">Register</div>

<div class="abs btn" style="left:358px;top:284px;width:89px">Add Node</div>
<div class="abs btn" style="left:453px;top:284px;width:64px">Save</div>

<div class="abs" id="menu"></div>
<div class="abs" id="menuin"></div>
<div class="abs" style="left:113px;top:403px;width:131px;height:29px;background:#dde2ee"></div>
<div class="abs mi" style="left:142px;top:208px">Add new Node</div>
<div class="abs mi" style="left:142px;top:237px">Edit Node's Page</div>
<div class="abs mi" style="left:142px;top:266px">Edit this Node</div>
<div class="abs mi" style="left:142px;top:295px">Copy Node</div>
<div class="abs mi" style="left:142px;top:323px">Clone Node</div>
<div class="abs mi" style="left:142px;top:352px">Cut Node</div>
<div class="abs mi" style="left:142px;top:381px">Delete Node</div>
<div class="abs mi" style="left:142px;top:410px;color:#f49c10">Move Up</div>
<div class="abs mi" style="left:142px;top:439px">Move Down</div>
<svg class="abs" style="left:0;top:0" width="630" height="474" viewBox="0 0 630 474">
<defs>
<linearGradient id="gplus" x1="0" y1="0" x2="0" y2="1"><stop offset="0" stop-color="#0c5a88"/><stop offset="0.5" stop-color="#1478a0"/><stop offset="1" stop-color="#48c8e0"/></linearGradient>
<linearGradient id="gcirc" x1="0" y1="0" x2="0" y2="1"><stop offset="0" stop-color="#f8f8f8"/><stop offset="0.5" stop-color="#f0f0f0"/><stop offset="0.55" stop-color="#dedede"/><stop offset="1" stop-color="#e8e8e8"/></linearGradient>
<linearGradient id="gblue" x1="0" y1="0" x2="1" y2="0"><stop offset="0" stop-color="#1f78c0"/><stop offset="0.45" stop-color="#7cc6ee"/><stop offset="1" stop-color="#1f78c0"/></linearGradient>
<linearGradient id="gleft" x1="0" y1="0" x2="0" y2="1"><stop offset="0" stop-color="#a0a0a0"/><stop offset="1" stop-color="#181818"/></linearGradient>
<linearGradient id="gcur" x1="0" y1="0" x2="1" y2="0"><stop offset="0" stop-color="#05050f"/><stop offset="0.25" stop-color="#4858a0"/><stop offset="0.5" stop-color="#080818"/></linearGradient>
</defs>
<!-- add -->
<circle cx="128.75" cy="215" r="8.3" fill="url(#gcirc)" stroke="#bcbcbc" stroke-width="1"/>
<path d="M124.9 208A8 8 0 0 1 132.6 208" fill="none" stroke="#a0a0a0" stroke-width="1.3"/>
<rect x="124" y="214" width="11" height="2" fill="url(#gplus)"/>
<rect x="128" y="210" width="2" height="11" fill="url(#gplus)"/>
<!-- edit page -->
<path d="M120.5 240L125 235.5H135.5V252.5H120.5Z" fill="#fff" stroke="#8c8c8c"/>
<rect x="125" y="235" width="11" height="1.5" fill="#9a9a9a"/>
<path d="M120.5 240H125V235.5" fill="#f0f0f0" stroke="#a0a0a0"/>
<rect x="123" y="242" width="11" height="8" fill="#e6e6e6"/>
<rect x="127" y="239" width="7" height="1" fill="#d8d8d8"/>
<g transform="translate(132.6,242.6) rotate(-45)">
<rect x="-4" y="-1.4" width="8.6" height="2.8" fill="#6e9ef0"/>
<rect x="-4" y="-1.4" width="8.6" height="0.7" fill="#88a8d8"/>
<rect x="-4" y="-0.5" width="8.6" height="0.9" fill="#d0e0ff"/>
<rect x="-4" y="0.8" width="8.6" height="0.6" fill="#20408a"/>
<rect x="4.4" y="-1.4" width="2.2" height="2.8" rx="1" fill="#e8401e"/>
<path d="M-4 -1.4L-6.2 -0.9V1.2L-4 1.4Z" fill="#f8d42a"/>
<path d="M-6.2 -0.9L-7.2 0.1L-6.2 1.2Z" fill="#303030"/>
</g>
<!-- edit node -->
<circle cx="128.75" cy="272.5" r="8.3" fill="url(#gcirc)" stroke="#bcbcbc" stroke-width="1"/>
<path d="M124.9 265.5A8 8 0 0 1 132.6 265.5" fill="none" stroke="#a8a8a8" stroke-width="1.3"/>
<g transform="translate(129.8,271.5) rotate(-45)">
<rect x="-4" y="-1.4" width="8.6" height="2.8" fill="#6e9ef0"/>
<rect x="-4" y="-1.4" width="8.6" height="0.7" fill="#88a8d8"/>
<rect x="-4" y="-0.5" width="8.6" height="0.9" fill="#d0e0ff"/>
<rect x="-4" y="0.8" width="8.6" height="0.6" fill="#20408a"/>
<rect x="4.4" y="-1.4" width="2.2" height="2.8" rx="1" fill="#e8401e"/>
<path d="M-4 -1.4L-6.2 -0.9V1.2L-4 1.4Z" fill="#f8d42a"/>
<path d="M-6.2 -0.9L-7.2 0.1L-6.2 1.2Z" fill="#303030"/>
</g>
<!-- copy -->
<path d="M121.5 298L126 293.5H133.5V308.5H121.5Z" fill="#fff" stroke="#8a8a8a"/>
<rect x="121" y="298" width="2" height="11" fill="#9a9a9a"/>
<rect x="126" y="293" width="7.5" height="2" fill="#a0a0a0"/>
<path d="M125.5 301L130 296.5H136.5V310.5H125.5Z" fill="#fff" stroke="#7a7a7a"/>
<path d="M125.5 301H130V296.5" fill="#f2f2f2" stroke="#a8a8a8"/>
<rect x="127.5" y="303" width="7" height="6" fill="#e8e8e8"/>
<!-- clone -->
<path d="M121.5 327L126 322.5H133.5V337.5H121.5Z" fill="#fff" stroke="#8a8a8a"/>
<rect x="121" y="327" width="2" height="11" fill="#9a9a9a"/>
<rect x="126" y="322" width="7.5" height="2" fill="#a0a0a0"/>
<path d="M125.5 330L130 325.5H136.5V339.5H125.5Z" fill="#fff" stroke="#7a7a7a"/>
<path d="M125.5 330H130V325.5" fill="#f2f2f2" stroke="#a8a8a8"/>
<rect x="127" y="329" width="8" height="1" fill="#8a8a8a"/>
<rect x="127" y="331" width="8" height="1" fill="#8a8a8a"/>
<rect x="127" y="334" width="8" height="1" fill="#8a8a8a"/>
<rect x="127" y="336" width="8" height="1" fill="#8a8a8a"/>
<!-- cut -->
<path d="M125.4 351.5L129.4 361.5M132.2 351.5L127.8 361.5" stroke="#7a7a7a" stroke-width="1.2" fill="none"/>
<path d="M125.4 351.5L126.6 354.5M132.2 351.5L131 354.5" stroke="#c4c4c4" stroke-width="1.2" fill="none"/>
<path d="M128.6 359.8V362.5M127.6 361.5L126 364.2M129.6 361.5L131 364.2" stroke="#1a68a8" stroke-width="1.5" fill="none"/>
<circle cx="124.9" cy="366.2" r="2.1" fill="#fff" stroke="#1a6aaa" stroke-width="1.6"/>
<circle cx="132.2" cy="366.2" r="2.1" fill="#fff" stroke="#1a6aaa" stroke-width="1.6"/>
<!-- delete -->
<rect x="123.8" y="386" width="12.4" height="11.5" rx="1.2" fill="#f4f4f4" stroke="#3a3a3a" stroke-width="1"/>
<rect x="126" y="388" width="1" height="8.5" fill="#777"/>
<rect x="128.2" y="388" width="1" height="8.5" fill="#777"/>
<rect x="130.3" y="388" width="4.2" height="8.5" fill="#a8a8a8"/>
<rect x="121.5" y="383.5" width="16" height="2.4" rx="1" fill="#e8e8e8" stroke="#3a3a3a" stroke-width="1"/>
<rect x="128" y="380.3" width="3" height="2" rx="0.6" fill="#707070" stroke="#3a3a3a" stroke-width="0.6"/>
<!-- move up -->
<path d="M121.5 409.5H133L136.5 413V425.5H121.5Z" fill="#fff" stroke="#a0a0a0"/>
<rect x="121" y="409" width="2" height="17" fill="url(#gleft)"/>
<rect x="123" y="410.5" width="3" height="3" fill="#7cc4f0"/>
<rect x="124.5" y="416" width="1" height="1" fill="#c0c0c0"/><rect x="124.5" y="418" width="1" height="1" fill="#c0c0c0"/><rect x="124.5" y="420" width="1" height="1" fill="#c0c0c0"/>
<rect x="131.8" y="416" width="1.2" height="1" fill="#c0c0c0"/><rect x="131.8" y="418" width="1.2" height="1" fill="#c0c0c0"/><rect x="131.8" y="420" width="1.2" height="1" fill="#c0c0c0"/>
<path d="M128.5 409.3L133 414.3H131V422.7H126V414.3H124Z" fill="url(#gblue)" stroke="#1a68b0" stroke-width="0.8"/>
<!-- move down -->
<path d="M121.5 438.5H133L136.5 442V454.5H121.5Z" fill="#fff" stroke="#a0a0a0"/>
<rect x="121" y="438" width="2" height="17" fill="url(#gleft)"/>
<rect x="123" y="439.5" width="6.5" height="3" fill="#7cc4f0"/>
<rect x="124.5" y="445" width="1" height="1" fill="#c0c0c0"/><rect x="124.5" y="447" width="1" height="1" fill="#c0c0c0"/>
<rect x="131.8" y="445" width="1.2" height="1" fill="#c0c0c0"/><rect x="131.8" y="447" width="1.2" height="1" fill="#c0c0c0"/>
<path d="M126 441.7H131V450H133.5L128.5 454.8L124 450H126Z" fill="url(#gblue)" stroke="#1a68b0" stroke-width="0.8"/>
<!-- cursor -->
<path d="M210.4 428.6V439.6L213.2 437.2L215.8 443.3L217.6 442.4L215 436.6H218.6Z" fill="#fff" stroke="#fff" stroke-width="2.6" stroke-linejoin="round"/>
<path d="M210.4 428.6V439.6L213.2 437.2L215.8 443.3L217.6 442.4L215 436.6H218.6Z" fill="url(#gcur)"/>
</svg>
</body></html>
